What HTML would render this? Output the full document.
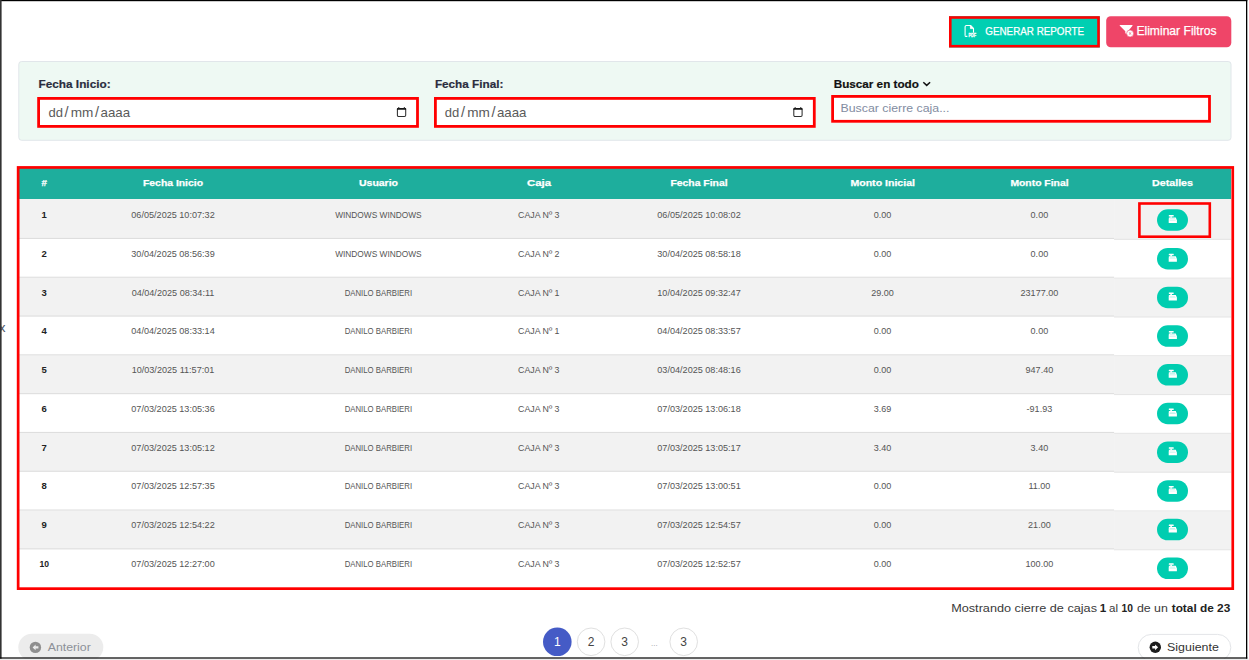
<!DOCTYPE html>
<html lang="es"><head><meta charset="utf-8"><title>Cierre de cajas</title>
<style>
html,body{margin:0;padding:0;background:#fff;}
body{width:1249px;height:660px;position:relative;overflow:hidden;font-family:"Liberation Sans",sans-serif;}
svg.l{position:absolute;left:0;top:0;display:block;}
.t{position:absolute;white-space:pre;line-height:1;}
.t b{font-weight:700;color:#222}
</style></head><body>
<svg class="l" width="1249" height="660" viewBox="0 0 1249 660">
<rect x="949.00" y="16.20" width="150.80" height="31.30" fill="#00cfb2"/>
<rect x="950.30" y="17.50" width="148.20" height="28.70" fill="none" stroke="#ff0000" stroke-width="2.6"/>
<rect x="1106.20" y="16.20" width="125.10" height="31.00" fill="#ef4568" rx="4.5"/>
<rect x="18.8" y="61.5" width="1212.2" height="78.8" rx="2.8" fill="#eef9f3" stroke="#e1e6ea" stroke-width="1"/>
<rect x="37.20" y="97.00" width="381.70" height="30.80" fill="#fff"/>
<rect x="38.60" y="98.40" width="378.90" height="28.00" fill="none" stroke="#ff0000" stroke-width="2.8"/>
<rect x="434.00" y="97.00" width="381.70" height="30.80" fill="#fff"/>
<rect x="435.40" y="98.40" width="378.90" height="28.00" fill="none" stroke="#ff0000" stroke-width="2.8"/>
<rect x="831.20" y="95.00" width="379.70" height="27.70" fill="#fff"/>
<rect x="832.60" y="96.40" width="376.90" height="24.90" fill="none" stroke="#ff0000" stroke-width="2.8"/>
<rect x="19.00" y="168.00" width="1212.00" height="31.00" fill="#1eae9d"/>
<rect x="19.00" y="199.00" width="1095.10" height="39.95" fill="#f2f2f2"/>
<rect x="1114.10" y="199.00" width="116.90" height="40.85" fill="#f2f2f2"/>
<rect x="19.00" y="238.95" width="1095.10" height="38.80" fill="#ffffff"/>
<rect x="1114.10" y="239.85" width="116.90" height="38.80" fill="#ffffff"/>
<rect x="19.00" y="277.75" width="1095.10" height="38.80" fill="#f2f2f2"/>
<rect x="1114.10" y="278.65" width="116.90" height="38.80" fill="#f2f2f2"/>
<rect x="19.00" y="316.55" width="1095.10" height="38.80" fill="#ffffff"/>
<rect x="1114.10" y="317.45" width="116.90" height="38.80" fill="#ffffff"/>
<rect x="19.00" y="355.35" width="1095.10" height="38.80" fill="#f2f2f2"/>
<rect x="1114.10" y="356.25" width="116.90" height="38.80" fill="#f2f2f2"/>
<rect x="19.00" y="394.15" width="1095.10" height="38.80" fill="#ffffff"/>
<rect x="1114.10" y="395.05" width="116.90" height="38.80" fill="#ffffff"/>
<rect x="19.00" y="432.95" width="1095.10" height="38.80" fill="#f2f2f2"/>
<rect x="1114.10" y="433.85" width="116.90" height="38.80" fill="#f2f2f2"/>
<rect x="19.00" y="471.75" width="1095.10" height="38.80" fill="#ffffff"/>
<rect x="1114.10" y="472.65" width="116.90" height="38.80" fill="#ffffff"/>
<rect x="19.00" y="510.55" width="1095.10" height="38.80" fill="#f2f2f2"/>
<rect x="1114.10" y="511.45" width="116.90" height="38.80" fill="#f2f2f2"/>
<rect x="19.00" y="549.35" width="1095.10" height="38.80" fill="#ffffff"/>
<rect x="1114.10" y="550.25" width="116.90" height="38.80" fill="#ffffff"/>
<rect x="19.00" y="237.90" width="1095.10" height="1.10" fill="#dedede"/>
<rect x="1114.10" y="238.80" width="116.90" height="1.10" fill="#e6e6e6"/>
<rect x="19.00" y="276.70" width="1095.10" height="1.10" fill="#dedede"/>
<rect x="1114.10" y="277.60" width="116.90" height="1.10" fill="#e6e6e6"/>
<rect x="19.00" y="315.50" width="1095.10" height="1.10" fill="#dedede"/>
<rect x="1114.10" y="316.40" width="116.90" height="1.10" fill="#e6e6e6"/>
<rect x="19.00" y="354.30" width="1095.10" height="1.10" fill="#dedede"/>
<rect x="1114.10" y="355.20" width="116.90" height="1.10" fill="#e6e6e6"/>
<rect x="19.00" y="393.10" width="1095.10" height="1.10" fill="#dedede"/>
<rect x="1114.10" y="394.00" width="116.90" height="1.10" fill="#e6e6e6"/>
<rect x="19.00" y="431.90" width="1095.10" height="1.10" fill="#dedede"/>
<rect x="1114.10" y="432.80" width="116.90" height="1.10" fill="#e6e6e6"/>
<rect x="19.00" y="470.70" width="1095.10" height="1.10" fill="#dedede"/>
<rect x="1114.10" y="471.60" width="116.90" height="1.10" fill="#e6e6e6"/>
<rect x="19.00" y="509.50" width="1095.10" height="1.10" fill="#dedede"/>
<rect x="1114.10" y="510.40" width="116.90" height="1.10" fill="#e6e6e6"/>
<rect x="19.00" y="548.30" width="1095.10" height="1.10" fill="#dedede"/>
<rect x="1114.10" y="549.20" width="116.90" height="1.10" fill="#e6e6e6"/>
<rect x="1157.00" y="209.25" width="31.00" height="21.50" fill="#00cdb0" rx="10.75"/>
<g transform="translate(1168.50,215.00)" fill="#fff"><rect x="0.3" y="0" width="4.9" height="1.5" rx=".3"/><rect x="1.8" y="1.3" width="1.6" height="1.4"/><path d="M0.4 2.5h6.9l1.1 2.7v2.8h-8.2v-3.3z"/><path d="M1.2 3.5h5.4v.6h-5.4zM1 4.8h6.2v.6h-6.2z" fill="#00cdb0" opacity=".3"/></g>
<rect x="1157.00" y="247.95" width="31.00" height="21.50" fill="#00cdb0" rx="10.75"/>
<g transform="translate(1168.50,253.70)" fill="#fff"><rect x="0.3" y="0" width="4.9" height="1.5" rx=".3"/><rect x="1.8" y="1.3" width="1.6" height="1.4"/><path d="M0.4 2.5h6.9l1.1 2.7v2.8h-8.2v-3.3z"/><path d="M1.2 3.5h5.4v.6h-5.4zM1 4.8h6.2v.6h-6.2z" fill="#00cdb0" opacity=".3"/></g>
<rect x="1157.00" y="286.66" width="31.00" height="21.50" fill="#00cdb0" rx="10.75"/>
<g transform="translate(1168.50,292.41)" fill="#fff"><rect x="0.3" y="0" width="4.9" height="1.5" rx=".3"/><rect x="1.8" y="1.3" width="1.6" height="1.4"/><path d="M0.4 2.5h6.9l1.1 2.7v2.8h-8.2v-3.3z"/><path d="M1.2 3.5h5.4v.6h-5.4zM1 4.8h6.2v.6h-6.2z" fill="#00cdb0" opacity=".3"/></g>
<rect x="1157.00" y="325.36" width="31.00" height="21.50" fill="#00cdb0" rx="10.75"/>
<g transform="translate(1168.50,331.11)" fill="#fff"><rect x="0.3" y="0" width="4.9" height="1.5" rx=".3"/><rect x="1.8" y="1.3" width="1.6" height="1.4"/><path d="M0.4 2.5h6.9l1.1 2.7v2.8h-8.2v-3.3z"/><path d="M1.2 3.5h5.4v.6h-5.4zM1 4.8h6.2v.6h-6.2z" fill="#00cdb0" opacity=".3"/></g>
<rect x="1157.00" y="364.06" width="31.00" height="21.50" fill="#00cdb0" rx="10.75"/>
<g transform="translate(1168.50,369.81)" fill="#fff"><rect x="0.3" y="0" width="4.9" height="1.5" rx=".3"/><rect x="1.8" y="1.3" width="1.6" height="1.4"/><path d="M0.4 2.5h6.9l1.1 2.7v2.8h-8.2v-3.3z"/><path d="M1.2 3.5h5.4v.6h-5.4zM1 4.8h6.2v.6h-6.2z" fill="#00cdb0" opacity=".3"/></g>
<rect x="1157.00" y="402.76" width="31.00" height="21.50" fill="#00cdb0" rx="10.75"/>
<g transform="translate(1168.50,408.51)" fill="#fff"><rect x="0.3" y="0" width="4.9" height="1.5" rx=".3"/><rect x="1.8" y="1.3" width="1.6" height="1.4"/><path d="M0.4 2.5h6.9l1.1 2.7v2.8h-8.2v-3.3z"/><path d="M1.2 3.5h5.4v.6h-5.4zM1 4.8h6.2v.6h-6.2z" fill="#00cdb0" opacity=".3"/></g>
<rect x="1157.00" y="441.47" width="31.00" height="21.50" fill="#00cdb0" rx="10.75"/>
<g transform="translate(1168.50,447.22)" fill="#fff"><rect x="0.3" y="0" width="4.9" height="1.5" rx=".3"/><rect x="1.8" y="1.3" width="1.6" height="1.4"/><path d="M0.4 2.5h6.9l1.1 2.7v2.8h-8.2v-3.3z"/><path d="M1.2 3.5h5.4v.6h-5.4zM1 4.8h6.2v.6h-6.2z" fill="#00cdb0" opacity=".3"/></g>
<rect x="1157.00" y="480.17" width="31.00" height="21.50" fill="#00cdb0" rx="10.75"/>
<g transform="translate(1168.50,485.92)" fill="#fff"><rect x="0.3" y="0" width="4.9" height="1.5" rx=".3"/><rect x="1.8" y="1.3" width="1.6" height="1.4"/><path d="M0.4 2.5h6.9l1.1 2.7v2.8h-8.2v-3.3z"/><path d="M1.2 3.5h5.4v.6h-5.4zM1 4.8h6.2v.6h-6.2z" fill="#00cdb0" opacity=".3"/></g>
<rect x="1157.00" y="518.87" width="31.00" height="21.50" fill="#00cdb0" rx="10.75"/>
<g transform="translate(1168.50,524.62)" fill="#fff"><rect x="0.3" y="0" width="4.9" height="1.5" rx=".3"/><rect x="1.8" y="1.3" width="1.6" height="1.4"/><path d="M0.4 2.5h6.9l1.1 2.7v2.8h-8.2v-3.3z"/><path d="M1.2 3.5h5.4v.6h-5.4zM1 4.8h6.2v.6h-6.2z" fill="#00cdb0" opacity=".3"/></g>
<rect x="1157.00" y="557.58" width="31.00" height="21.50" fill="#00cdb0" rx="10.75"/>
<g transform="translate(1168.50,563.33)" fill="#fff"><rect x="0.3" y="0" width="4.9" height="1.5" rx=".3"/><rect x="1.8" y="1.3" width="1.6" height="1.4"/><path d="M0.4 2.5h6.9l1.1 2.7v2.8h-8.2v-3.3z"/><path d="M1.2 3.5h5.4v.6h-5.4zM1 4.8h6.2v.6h-6.2z" fill="#00cdb0" opacity=".3"/></g>
<rect x="18.15" y="167.45" width="1214.60" height="421.20" fill="none" stroke="#ff0000" stroke-width="2.7"/>
<rect x="1139.40" y="203.50" width="70.40" height="33.20" fill="none" stroke="#ff0000" stroke-width="2.6"/>
<rect x="18.30" y="633.70" width="85.00" height="27.00" fill="#ececec" rx="13.5"/>
<rect x="1138.2" y="634.4" width="92.6" height="26.4" rx="13.2" fill="#fff" stroke="#e3e5e8" stroke-width="1"/>
<circle cx="557.3" cy="641.8" r="14.3" fill="#455bc6"/>
<circle cx="591.1" cy="641.8" r="13.8" fill="#fff" stroke="#e0e0e0" stroke-width="1"/>
<circle cx="624.7" cy="641.8" r="13.8" fill="#fff" stroke="#e0e0e0" stroke-width="1"/>
<circle cx="683.7" cy="641.8" r="13.8" fill="#fff" stroke="#e0e0e0" stroke-width="1"/>
<g transform="translate(29.6,641.6)"><circle cx="5.8" cy="5.8" r="5.7" fill="#8f8f8f"/><path d="M6 2.9L3 5.8l3 2.9V7h2.8V4.6H6z" fill="#ececec"/></g>
<g transform="translate(1149.5,641.5)"><circle cx="5.8" cy="5.8" r="5.7" fill="#1d1d1d"/><path d="M5.6 2.9l3 2.9-3 2.9V7H2.8V4.6h2.8z" fill="#fff"/></g>
<g transform="translate(964,24.6)" fill="none" stroke="#fff"><path d="M1.1 11V2.2c0-.8.5-1.3 1.3-1.3h4.2l2.9 2.9v4.3" stroke-width="1.1" stroke-linejoin="round"/><path d="M6.4 1v3h3" fill="#fff" stroke-width=".8" stroke-linejoin="round"/><path d="M1.1 10.8c0 .6.4 1 1 1h1.3" stroke-width="1.1"/></g>
<text x="968.4" y="36.9" font-family="Liberation Sans, sans-serif" font-size="4.6" font-weight="700" fill="#fff" stroke="#fff" stroke-width=".3" textLength="7.6" lengthAdjust="spacingAndGlyphs">PDF</text>
<g transform="translate(1119,24)"><path d="M1 1.1h12.2c.4 0 .5.4.3.7L9 7.2v3.6L6.3 9.2V7.2L.8 1.8C.5 1.5.6 1.1 1 1.1z" fill="#fff"/><circle cx="11.1" cy="9.5" r="3.5" fill="#fff" stroke="#ef4568" stroke-width=".6"/><path d="M9.9 8.3l2.4 2.4M12.3 8.3l-2.4 2.4" stroke="#ef4568" stroke-width=".9" opacity=".75"/></g>
<g transform="translate(396.4,106.4)"><rect x="1" y="2.1" width="8.3" height="7.9" rx="1.2" fill="none" stroke="#2e2e2e" stroke-width="1.05"/><path d="M.5 3.3V2.6c0-.6.5-1 1-1h7.3c.6 0 1 .4 1 1v.7z" fill="#161616"/><rect x="1.8" y=".7" width="1.1" height="1.4" fill="#2a2a2a"/><rect x="7.4" y=".7" width="1.1" height="1.4" fill="#2a2a2a"/></g>
<g transform="translate(792.8,106.4)"><rect x="1" y="2.1" width="8.3" height="7.9" rx="1.2" fill="none" stroke="#2e2e2e" stroke-width="1.05"/><path d="M.5 3.3V2.6c0-.6.5-1 1-1h7.3c.6 0 1 .4 1 1v.7z" fill="#161616"/><rect x="1.8" y=".7" width="1.1" height="1.4" fill="#2a2a2a"/><rect x="7.4" y=".7" width="1.1" height="1.4" fill="#2a2a2a"/></g>
<path d="M923.3 82.2l3.4 3.2 3.4-3.2" fill="none" stroke="#111" stroke-width="1.5"/>
<g font-family="Liberation Sans, sans-serif">
<text x="985.30" y="35.0" font-size="10.6" font-weight="400" fill="#fff" textLength="98.70" lengthAdjust="spacingAndGlyphs" stroke="#fff" stroke-width=".25">GENERAR REPORTE</text>
<text x="1136.40" y="35.0" font-size="12.2" font-weight="400" fill="#fff" textLength="80.10" lengthAdjust="spacingAndGlyphs" stroke="#fff" stroke-width=".25">Eliminar Filtros</text>
<text x="38.50" y="88.0" font-size="11.8" font-weight="700" fill="#2a2d3e" textLength="72.10" lengthAdjust="spacingAndGlyphs" stroke="#2a2d3e" stroke-width=".2">Fecha Inicio:</text>
<text x="434.90" y="88.0" font-size="11.8" font-weight="700" fill="#2a2d3e" textLength="68.50" lengthAdjust="spacingAndGlyphs" stroke="#2a2d3e" stroke-width=".2">Fecha Final:</text>
<text x="833.70" y="88.0" font-size="11.8" font-weight="700" fill="#111" textLength="85.20" lengthAdjust="spacingAndGlyphs" stroke="#111" stroke-width=".2">Buscar en todo</text>
<text x="48.40" y="117.0" font-size="13.5" font-weight="400" fill="#5a5a5a" textLength="14.50" lengthAdjust="spacingAndGlyphs">dd</text>
<text x="64.60" y="117.0" font-size="14.5" font-weight="400" fill="#5a5a5a">/</text>
<text x="70.80" y="117.0" font-size="13.5" font-weight="400" fill="#5a5a5a" textLength="22.60" lengthAdjust="spacingAndGlyphs">mm</text>
<text x="95.00" y="117.0" font-size="14.5" font-weight="400" fill="#5a5a5a">/</text>
<text x="100.50" y="117.0" font-size="13.5" font-weight="400" fill="#5a5a5a" textLength="29.60" lengthAdjust="spacingAndGlyphs">aaaa</text>
<text x="444.80" y="117.0" font-size="13.5" font-weight="400" fill="#5a5a5a" textLength="14.50" lengthAdjust="spacingAndGlyphs">dd</text>
<text x="461.00" y="117.0" font-size="14.5" font-weight="400" fill="#5a5a5a">/</text>
<text x="467.20" y="117.0" font-size="13.5" font-weight="400" fill="#5a5a5a" textLength="22.60" lengthAdjust="spacingAndGlyphs">mm</text>
<text x="491.40" y="117.0" font-size="14.5" font-weight="400" fill="#5a5a5a">/</text>
<text x="496.90" y="117.0" font-size="13.5" font-weight="400" fill="#5a5a5a" textLength="29.60" lengthAdjust="spacingAndGlyphs">aaaa</text>
<text x="840.50" y="111.5" font-size="11.2" font-weight="400" fill="#828ca1" textLength="108.90" lengthAdjust="spacingAndGlyphs">Buscar cierre caja...</text>
<text x="41.50" y="186.0" font-size="9.7" font-weight="700" fill="#fff" stroke="#fff" stroke-width=".25">#</text>
<text x="143.00" y="186.0" font-size="9.7" font-weight="700" fill="#fff" textLength="60.00" lengthAdjust="spacingAndGlyphs" stroke="#fff" stroke-width=".25">Fecha Inicio</text>
<text x="359.00" y="186.0" font-size="9.7" font-weight="700" fill="#fff" textLength="39.00" lengthAdjust="spacingAndGlyphs" stroke="#fff" stroke-width=".25">Usuario</text>
<text x="527.00" y="186.0" font-size="9.7" font-weight="700" fill="#fff" textLength="24.00" lengthAdjust="spacingAndGlyphs" stroke="#fff" stroke-width=".25">Caja</text>
<text x="670.40" y="186.0" font-size="9.7" font-weight="700" fill="#fff" textLength="57.20" lengthAdjust="spacingAndGlyphs" stroke="#fff" stroke-width=".25">Fecha Final</text>
<text x="850.40" y="186.0" font-size="9.7" font-weight="700" fill="#fff" textLength="64.60" lengthAdjust="spacingAndGlyphs" stroke="#fff" stroke-width=".25">Monto Inicial</text>
<text x="1010.40" y="186.0" font-size="9.7" font-weight="700" fill="#fff" textLength="58.20" lengthAdjust="spacingAndGlyphs" stroke="#fff" stroke-width=".25">Monto Final</text>
<text x="1152.00" y="186.0" font-size="9.7" font-weight="700" fill="#fff" textLength="41.00" lengthAdjust="spacingAndGlyphs" stroke="#fff" stroke-width=".25">Detalles</text>
<text x="41.55" y="218.0" font-size="9.5" font-weight="700" fill="#222">1</text>
<text x="131.30" y="218.0" font-size="9.5" font-weight="400" fill="#555" textLength="83.41" lengthAdjust="spacingAndGlyphs">06/05/2025 10:07:32</text>
<text x="335.15" y="218.0" font-size="9.3" font-weight="400" fill="#555" textLength="86.50" lengthAdjust="spacingAndGlyphs">WINDOWS WINDOWS</text>
<text x="518.10" y="218.0" font-size="9.5" font-weight="400" fill="#555" textLength="41.40" lengthAdjust="spacingAndGlyphs">CAJA Nº 3</text>
<text x="657.30" y="218.0" font-size="9.5" font-weight="400" fill="#555" textLength="83.41" lengthAdjust="spacingAndGlyphs">06/05/2025 10:08:02</text>
<text x="873.70" y="218.0" font-size="9.5" font-weight="400" fill="#555" textLength="17.60" lengthAdjust="spacingAndGlyphs">0.00</text>
<text x="1030.60" y="218.0" font-size="9.5" font-weight="400" fill="#555" textLength="17.60" lengthAdjust="spacingAndGlyphs">0.00</text>
<text x="41.55" y="257.0" font-size="9.5" font-weight="700" fill="#222">2</text>
<text x="131.30" y="257.0" font-size="9.5" font-weight="400" fill="#555" textLength="83.41" lengthAdjust="spacingAndGlyphs">30/04/2025 08:56:39</text>
<text x="335.15" y="257.0" font-size="9.3" font-weight="400" fill="#555" textLength="86.50" lengthAdjust="spacingAndGlyphs">WINDOWS WINDOWS</text>
<text x="518.10" y="257.0" font-size="9.5" font-weight="400" fill="#555" textLength="41.40" lengthAdjust="spacingAndGlyphs">CAJA Nº 2</text>
<text x="657.30" y="257.0" font-size="9.5" font-weight="400" fill="#555" textLength="83.41" lengthAdjust="spacingAndGlyphs">30/04/2025 08:58:18</text>
<text x="873.70" y="257.0" font-size="9.5" font-weight="400" fill="#555" textLength="17.60" lengthAdjust="spacingAndGlyphs">0.00</text>
<text x="1030.60" y="257.0" font-size="9.5" font-weight="400" fill="#555" textLength="17.60" lengthAdjust="spacingAndGlyphs">0.00</text>
<text x="41.55" y="295.5" font-size="9.5" font-weight="700" fill="#222">3</text>
<text x="131.63" y="295.5" font-size="9.5" font-weight="400" fill="#555" textLength="82.74" lengthAdjust="spacingAndGlyphs">04/04/2025 08:34:11</text>
<text x="344.70" y="295.5" font-size="9.3" font-weight="400" fill="#555" textLength="67.40" lengthAdjust="spacingAndGlyphs">DANILO BARBIERI</text>
<text x="518.10" y="295.5" font-size="9.5" font-weight="400" fill="#555" textLength="41.40" lengthAdjust="spacingAndGlyphs">CAJA Nº 1</text>
<text x="657.30" y="295.5" font-size="9.5" font-weight="400" fill="#555" textLength="83.41" lengthAdjust="spacingAndGlyphs">10/04/2025 09:32:47</text>
<text x="871.19" y="295.5" font-size="9.5" font-weight="400" fill="#555" textLength="22.63" lengthAdjust="spacingAndGlyphs">29.00</text>
<text x="1020.55" y="295.5" font-size="9.5" font-weight="400" fill="#555" textLength="37.71" lengthAdjust="spacingAndGlyphs">23177.00</text>
<text x="41.55" y="334.0" font-size="9.5" font-weight="700" fill="#222">4</text>
<text x="131.30" y="334.0" font-size="9.5" font-weight="400" fill="#555" textLength="83.41" lengthAdjust="spacingAndGlyphs">04/04/2025 08:33:14</text>
<text x="344.70" y="334.0" font-size="9.3" font-weight="400" fill="#555" textLength="67.40" lengthAdjust="spacingAndGlyphs">DANILO BARBIERI</text>
<text x="518.10" y="334.0" font-size="9.5" font-weight="400" fill="#555" textLength="41.40" lengthAdjust="spacingAndGlyphs">CAJA Nº 1</text>
<text x="657.30" y="334.0" font-size="9.5" font-weight="400" fill="#555" textLength="83.41" lengthAdjust="spacingAndGlyphs">04/04/2025 08:33:57</text>
<text x="873.70" y="334.0" font-size="9.5" font-weight="400" fill="#555" textLength="17.60" lengthAdjust="spacingAndGlyphs">0.00</text>
<text x="1030.60" y="334.0" font-size="9.5" font-weight="400" fill="#555" textLength="17.60" lengthAdjust="spacingAndGlyphs">0.00</text>
<text x="41.55" y="373.0" font-size="9.5" font-weight="700" fill="#222">5</text>
<text x="131.63" y="373.0" font-size="9.5" font-weight="400" fill="#555" textLength="82.74" lengthAdjust="spacingAndGlyphs">10/03/2025 11:57:01</text>
<text x="344.70" y="373.0" font-size="9.3" font-weight="400" fill="#555" textLength="67.40" lengthAdjust="spacingAndGlyphs">DANILO BARBIERI</text>
<text x="518.10" y="373.0" font-size="9.5" font-weight="400" fill="#555" textLength="41.40" lengthAdjust="spacingAndGlyphs">CAJA Nº 3</text>
<text x="657.30" y="373.0" font-size="9.5" font-weight="400" fill="#555" textLength="83.41" lengthAdjust="spacingAndGlyphs">03/04/2025 08:48:16</text>
<text x="873.70" y="373.0" font-size="9.5" font-weight="400" fill="#555" textLength="17.60" lengthAdjust="spacingAndGlyphs">0.00</text>
<text x="1025.57" y="373.0" font-size="9.5" font-weight="400" fill="#555" textLength="27.66" lengthAdjust="spacingAndGlyphs">947.40</text>
<text x="41.55" y="412.0" font-size="9.5" font-weight="700" fill="#222">6</text>
<text x="131.30" y="412.0" font-size="9.5" font-weight="400" fill="#555" textLength="83.41" lengthAdjust="spacingAndGlyphs">07/03/2025 13:05:36</text>
<text x="344.70" y="412.0" font-size="9.3" font-weight="400" fill="#555" textLength="67.40" lengthAdjust="spacingAndGlyphs">DANILO BARBIERI</text>
<text x="518.10" y="412.0" font-size="9.5" font-weight="400" fill="#555" textLength="41.40" lengthAdjust="spacingAndGlyphs">CAJA Nº 3</text>
<text x="657.30" y="412.0" font-size="9.5" font-weight="400" fill="#555" textLength="83.41" lengthAdjust="spacingAndGlyphs">07/03/2025 13:06:18</text>
<text x="873.70" y="412.0" font-size="9.5" font-weight="400" fill="#555" textLength="17.60" lengthAdjust="spacingAndGlyphs">3.69</text>
<text x="1026.58" y="412.0" font-size="9.5" font-weight="400" fill="#555" textLength="25.63" lengthAdjust="spacingAndGlyphs">-91.93</text>
<text x="41.55" y="450.5" font-size="9.5" font-weight="700" fill="#222">7</text>
<text x="131.30" y="450.5" font-size="9.5" font-weight="400" fill="#555" textLength="83.41" lengthAdjust="spacingAndGlyphs">07/03/2025 13:05:12</text>
<text x="344.70" y="450.5" font-size="9.3" font-weight="400" fill="#555" textLength="67.40" lengthAdjust="spacingAndGlyphs">DANILO BARBIERI</text>
<text x="518.10" y="450.5" font-size="9.5" font-weight="400" fill="#555" textLength="41.40" lengthAdjust="spacingAndGlyphs">CAJA Nº 3</text>
<text x="657.30" y="450.5" font-size="9.5" font-weight="400" fill="#555" textLength="83.41" lengthAdjust="spacingAndGlyphs">07/03/2025 13:05:17</text>
<text x="873.70" y="450.5" font-size="9.5" font-weight="400" fill="#555" textLength="17.60" lengthAdjust="spacingAndGlyphs">3.40</text>
<text x="1030.60" y="450.5" font-size="9.5" font-weight="400" fill="#555" textLength="17.60" lengthAdjust="spacingAndGlyphs">3.40</text>
<text x="41.55" y="489.0" font-size="9.5" font-weight="700" fill="#222">8</text>
<text x="131.30" y="489.0" font-size="9.5" font-weight="400" fill="#555" textLength="83.41" lengthAdjust="spacingAndGlyphs">07/03/2025 12:57:35</text>
<text x="344.70" y="489.0" font-size="9.3" font-weight="400" fill="#555" textLength="67.40" lengthAdjust="spacingAndGlyphs">DANILO BARBIERI</text>
<text x="518.10" y="489.0" font-size="9.5" font-weight="400" fill="#555" textLength="41.40" lengthAdjust="spacingAndGlyphs">CAJA Nº 3</text>
<text x="657.30" y="489.0" font-size="9.5" font-weight="400" fill="#555" textLength="83.41" lengthAdjust="spacingAndGlyphs">07/03/2025 13:00:51</text>
<text x="873.70" y="489.0" font-size="9.5" font-weight="400" fill="#555" textLength="17.60" lengthAdjust="spacingAndGlyphs">0.00</text>
<text x="1028.42" y="489.0" font-size="9.5" font-weight="400" fill="#555" textLength="21.96" lengthAdjust="spacingAndGlyphs">11.00</text>
<text x="41.55" y="528.0" font-size="9.5" font-weight="700" fill="#222">9</text>
<text x="131.30" y="528.0" font-size="9.5" font-weight="400" fill="#555" textLength="83.41" lengthAdjust="spacingAndGlyphs">07/03/2025 12:54:22</text>
<text x="344.70" y="528.0" font-size="9.3" font-weight="400" fill="#555" textLength="67.40" lengthAdjust="spacingAndGlyphs">DANILO BARBIERI</text>
<text x="518.10" y="528.0" font-size="9.5" font-weight="400" fill="#555" textLength="41.40" lengthAdjust="spacingAndGlyphs">CAJA Nº 3</text>
<text x="657.30" y="528.0" font-size="9.5" font-weight="400" fill="#555" textLength="83.41" lengthAdjust="spacingAndGlyphs">07/03/2025 12:54:57</text>
<text x="873.70" y="528.0" font-size="9.5" font-weight="400" fill="#555" textLength="17.60" lengthAdjust="spacingAndGlyphs">0.00</text>
<text x="1028.09" y="528.0" font-size="9.5" font-weight="400" fill="#555" textLength="22.63" lengthAdjust="spacingAndGlyphs">21.00</text>
<text x="39.41" y="567.0" font-size="9.5" font-weight="700" fill="#222" textLength="9.58" lengthAdjust="spacingAndGlyphs">10</text>
<text x="131.30" y="567.0" font-size="9.5" font-weight="400" fill="#555" textLength="83.41" lengthAdjust="spacingAndGlyphs">07/03/2025 12:27:00</text>
<text x="344.70" y="567.0" font-size="9.3" font-weight="400" fill="#555" textLength="67.40" lengthAdjust="spacingAndGlyphs">DANILO BARBIERI</text>
<text x="518.10" y="567.0" font-size="9.5" font-weight="400" fill="#555" textLength="41.40" lengthAdjust="spacingAndGlyphs">CAJA Nº 3</text>
<text x="657.30" y="567.0" font-size="9.5" font-weight="400" fill="#555" textLength="83.41" lengthAdjust="spacingAndGlyphs">07/03/2025 12:52:57</text>
<text x="873.70" y="567.0" font-size="9.5" font-weight="400" fill="#555" textLength="17.60" lengthAdjust="spacingAndGlyphs">0.00</text>
<text x="1025.57" y="567.0" font-size="9.5" font-weight="400" fill="#555" textLength="27.66" lengthAdjust="spacingAndGlyphs">100.00</text>
<text x="951.20" y="611.5" font-size="11.7" font-weight="400" fill="#3a3a3a" textLength="145.80" lengthAdjust="spacingAndGlyphs">Mostrando cierre de cajas</text>
<text x="1099.80" y="611.5" font-size="11.7" font-weight="700" fill="#222">1</text>
<text x="1109.00" y="611.5" font-size="11.7" font-weight="400" fill="#3a3a3a" textLength="9.00" lengthAdjust="spacingAndGlyphs">al</text>
<text x="1121.60" y="611.5" font-size="11.7" font-weight="700" fill="#222" textLength="11.40" lengthAdjust="spacingAndGlyphs">10</text>
<text x="1136.90" y="611.5" font-size="11.7" font-weight="400" fill="#3a3a3a" textLength="31.00" lengthAdjust="spacingAndGlyphs">de un</text>
<text x="1171.70" y="611.5" font-size="11.7" font-weight="700" fill="#222" textLength="58.60" lengthAdjust="spacingAndGlyphs">total de 23</text>
<text x="47.70" y="651.0" font-size="11" font-weight="400" fill="#8d9198" textLength="43.10" lengthAdjust="spacingAndGlyphs">Anterior</text>
<text x="1167.10" y="650.5" font-size="11" font-weight="400" fill="#333" textLength="51.70" lengthAdjust="spacingAndGlyphs">Siguiente</text>
<text x="553.96" y="646.0" font-size="12" font-weight="400" fill="#fff">1</text>
<text x="587.76" y="646.0" font-size="12" font-weight="400" fill="#444">2</text>
<text x="621.36" y="646.0" font-size="12" font-weight="400" fill="#444">3</text>
<text x="680.36" y="646.0" font-size="12" font-weight="400" fill="#444">3</text>
<text x="651.05" y="645.5" font-size="8" font-weight="400" fill="#999" textLength="6.50" lengthAdjust="spacingAndGlyphs">...</text>
<text x="-1.20" y="332.0" font-size="13.5" font-weight="400" fill="#4d5263">x</text>
</g>
<rect x="0" y="0" width="1249" height="1.2" fill="#000"/>
<rect x="0" y="0" width="1.6" height="660" fill="#333"/>
<rect x="1247.3" y="0" width="1.7" height="660" fill="#fff"/>
<rect x="0" y="658.6" width="1249" height="1.4" fill="#ededed"/>
<rect x="1246" y="0" width="1.3" height="658.6" fill="#000"/>
<rect x="0" y="657.4" width="1247.3" height="1.2" fill="#000"/>
</svg>
</body></html>
